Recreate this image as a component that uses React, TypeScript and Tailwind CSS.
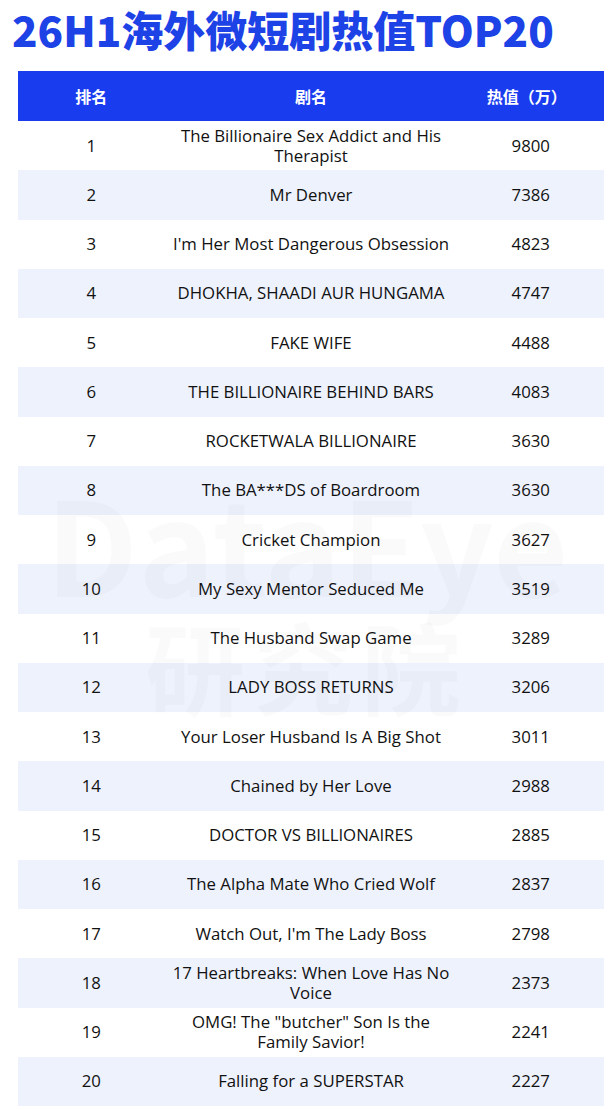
import React from "react";

const rows: [number, string, number][] = [
  [1, "The Billionaire Sex Addict and His Therapist", 9800],
  [2, "Mr Denver", 7386],
  [3, "I'm Her Most Dangerous Obsession", 4823],
  [4, "DHOKHA, SHAADI AUR HUNGAMA", 4747],
  [5, "FAKE WIFE", 4488],
  [6, "THE BILLIONAIRE BEHIND BARS", 4083],
  [7, "ROCKETWALA BILLIONAIRE", 3630],
  [8, "The BA***DS of Boardroom", 3630],
  [9, "Cricket Champion", 3627],
  [10, "My Sexy Mentor Seduced Me", 3519],
  [11, "The Husband Swap Game", 3289],
  [12, "LADY BOSS RETURNS", 3206],
  [13, "Your Loser Husband Is A Big Shot", 3011],
  [14, "Chained by Her Love", 2988],
  [15, "DOCTOR VS BILLIONAIRES", 2885],
  [16, "The Alpha Mate Who Cried Wolf", 2837],
  [17, "Watch Out, I'm The Lady Boss", 2798],
  [18, "17 Heartbreaks: When Love Has No Voice", 2373],
  [19, "OMG! The \"butcher\" Son Is the\nFamily Savior!", 2241],
  [20, "Falling for a SUPERSTAR", 2227],
];

export default function App() {
  return (
    <div className="relative w-[614px] h-[1110px] bg-white overflow-hidden">
      <div className="flex flex-col h-[71px]">
        <h1
          className="pl-[12px] -mt-[2px] text-[42px] leading-[62px] font-black text-[#1d42e6] whitespace-nowrap"
          style={{ fontFamily: '"Noto Sans CJK SC", Inter, sans-serif' }}
        >
          26H1海外微短剧热值TOP20
        </h1>
      </div>
      <div className="ml-[18px] w-[586px]">
        <div
          className="grid grid-cols-[1fr_2fr_1fr] h-[50px] items-center bg-[#1a3cef] text-white text-[16px] font-bold"
          style={{ fontFamily: '"Noto Sans CJK SC", sans-serif' }}
        >
          <div className="text-center">排名</div>
          <div className="text-center">剧名</div>
          <div className="text-center pr-[8px]">热值（万）</div>
        </div>
        {rows.map(([rank, name, val]) => (
          <div
            key={rank}
            className={`grid grid-cols-[1fr_2fr_1fr] h-[49.25px] items-center text-[#111111] text-[16.8px] leading-[20px] ${
              rank % 2 === 0 ? "bg-[#eef2fd]" : "bg-white"
            }`}
            style={{ fontFamily: '"Open Sans", "Noto Sans", sans-serif' }}
          >
            <div className="text-center">{rank}</div>
            <div className="text-center whitespace-pre-line">{name}</div>
            <div className="text-center">{val}</div>
          </div>
        ))}
      </div>
      <div
        aria-hidden="true"
        className="pointer-events-none select-none absolute left-0 top-[470px] w-full flex flex-col items-center text-[rgba(0,0,0,0.02)] font-bold"
        style={{ fontFamily: '"Noto Sans CJK SC", sans-serif' }}
      >
        <div className="text-[130px] leading-[140px]">DataEye</div>
        <div className="text-[100px] leading-[110px] tracking-[8px]">研究院</div>
      </div>
    </div>
  );
}
